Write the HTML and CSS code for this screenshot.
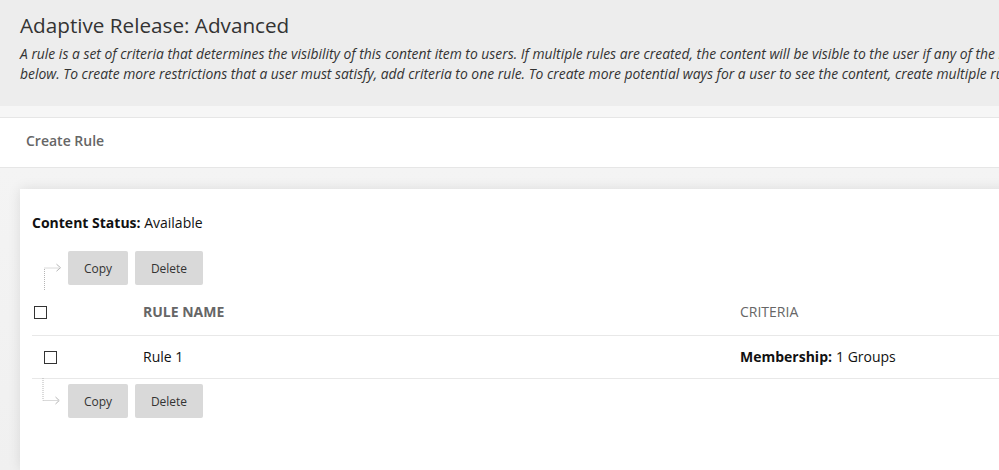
FILE: index.html
```html
<!DOCTYPE html>
<html lang="en">
<head>
<meta charset="utf-8">
<title>Adaptive Release: Advanced</title>
<link rel="stylesheet" href="styles.css">
</head>
<body>
<div class="page">
  <header class="header">
    <h1 class="title">Adaptive Release: Advanced</h1>
    <p class="desc">A rule is a set of criteria that determines the visibility of this content item to users. If multiple rules are created, the content will be visible to the user if any of the rules are satisfied, as shown below. To create more restrictions that a user must satisfy, add criteria to one rule. To create more potential ways for a user to see the content, create multiple rules.</p>
  </header>
  <div class="strip"></div>
  <nav class="tabbar"><span class="tab">Create Rule</span></nav>
  <main class="main">
    <section class="card">
      <div class="status"><b>Content Status:</b> Available</div>
      <div class="toolbar toolbar-top">
        <svg class="arrow arrow-up" width="24" height="30" viewBox="0 0 24 30">
          <path d="M4.5 29V7H19" fill="none" stroke="#b5b5b5" stroke-width="1" stroke-dasharray="1 1"/>
          <path d="M16.5 3.2L20.5 6.7L16.5 10.2" fill="none" stroke="#b5b5b5" stroke-width="1"/>
        </svg>
        <button class="btn">Copy</button>
        <button class="btn">Delete</button>
      </div>
      <div class="grid head">
        <div class="cell"><span class="cb"></span></div>
        <div class="cell th">RULE NAME</div>
        <div class="cell th light">CRITERIA</div>
      </div>
      <div class="grid row">
        <div class="cell"><span class="cb cb-row"></span></div>
        <div class="cell">Rule 1</div>
        <div class="cell"><b>Membership:</b> 1 Groups</div>
      </div>
      <div class="toolbar toolbar-bottom">
        <svg class="arrow arrow-down" width="24" height="30" viewBox="0 0 24 30">
          <path d="M3 0V22.5H18" fill="none" stroke="#b5b5b5" stroke-width="1" stroke-dasharray="1 1"/>
          <path d="M15.5 19L19.2 22.5L15.5 26" fill="none" stroke="#b5b5b5" stroke-width="1"/>
        </svg>
        <button class="btn">Copy</button>
        <button class="btn">Delete</button>
      </div>
    </section>
  </main>
</div>
</body>
</html>
```
FILE: styles.css
```css
html, body {
  margin: 0;
  padding: 0;
  overflow: hidden;
  height: 470px;
}
body {
  font-family: "Open Sans", "Liberation Sans", sans-serif;
  color: #222;
  background: #f2f2f2;
}
.page {
  width: 1400px;
}
.header {
  background: #ededed;
  height: 106px;
  box-sizing: border-box;
  padding: 10px 20px 0 20px;
}
.title {
  margin: 0;
  font-size: 20.7px;
  font-weight: 400;
  line-height: 30px;
  color: #333;
}
.desc {
  margin: 4px 0 0 0;
  max-width: 1160px;
  font-size: 13.88px;
  font-style: italic;
  line-height: 20px;
  color: #333;
}
.strip {
  height: 11px;
  background: #f6f6f6;
  border-bottom: 1px solid #e6e6e6;
}
.tabbar {
  height: 50px;
  box-sizing: border-box;
  background: #fff;
  border-bottom: 1px solid #e6e6e6;
  display: flex;
  align-items: center;
  padding: 0 0 5px 26px;
}
.tab {
  font-size: 14px;
  font-weight: 600;
  color: #666;
}
.main {
  padding: 21px 0 0 20px;
  height: 302px;
  box-sizing: border-box;
  background: linear-gradient(#f4f4f4, #f0f0f0);
}
.card {
  background: #fff;
  height: 100%;
  box-shadow: 0 0 12px rgba(0, 0, 0, 0.10);
  padding: 24px 0 0 12px;
  box-sizing: border-box;
  font-size: 14px;
}
.status {
  font-size: 14px;
  line-height: 20px;
  color: #111;
}
.status b {
  font-weight: 700;
}
.toolbar {
  display: flex;
  gap: 7px;
  padding-left: 36px;
  position: relative;
}
.toolbar-top {
  margin-top: 18px;
}
.toolbar-bottom {
  padding-top: 5px;
}
.arrow {
  position: absolute;
  left: 8px;
}
.arrow-up {
  top: 10px;
}
.arrow-down {
  top: -1px;
  left: 8px;
}
.btn {
  font-family: inherit;
  font-size: 12px;
  color: #333;
  background: #d9d9d9;
  border: 0;
  border-radius: 2px;
  height: 34px;
  padding: 0 12px;
}
.btn:first-of-type {
  width: 60px;
}
.btn:last-of-type {
  width: 68px;
}
.grid {
  display: grid;
  grid-template-columns: 111px 597px 1fr;
  align-items: center;
  border-bottom: 1px solid #e8e8e8;
}
.head {
  height: 51px;
  box-sizing: border-box;
  padding-top: 4px;
}
.row {
  height: 43px;
  box-sizing: border-box;
}
.cell {
  font-size: 14px;
  line-height: 20px;
  color: #111;
  display: flex;
  align-items: center;
}
.th {
  font-weight: 700;
  color: #666;
}
.th.light {
  font-weight: 400;
}
.cell b {
  font-weight: 700;
  margin-right: 4px;
}
.cb {
  display: inline-block;
  width: 13px;
  height: 13px;
  box-sizing: border-box;
  border: 1px solid #333;
  margin-left: 2px;
}
.cb-row {
  margin-left: 12px;
}
```
